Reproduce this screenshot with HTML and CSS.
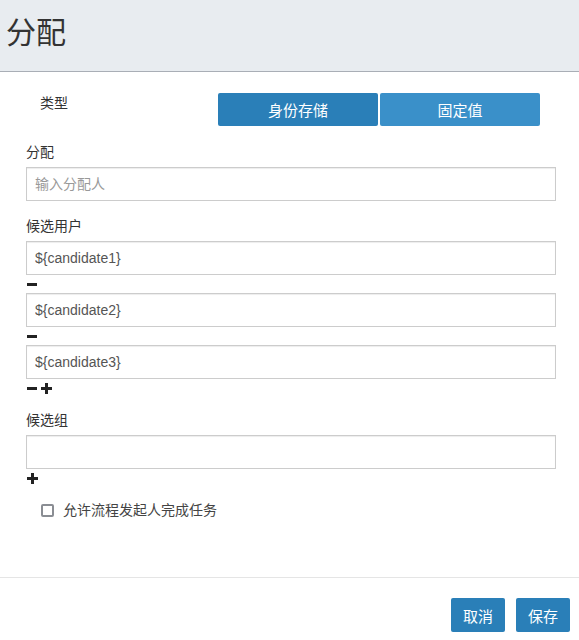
FILE: index.html
```html
<!DOCTYPE html>
<html lang="zh-CN">
    <head>
        <meta charset="utf-8">
        <title>分配</title>
        <link rel="stylesheet" href="styles.css">
    </head>
    <body>
        <div class="modal">
            <div class="modal-header">
                <h2>分配</h2>
            </div>

            <div class="modal-body">
                <div class="type-row">
                    <span class="type-label">类型</span>
                    <div class="btn-group">
                        <button class="btn btn-active">身份存储</button>
                        <button class="btn btn-light">固定值</button>
                    </div>
                </div>

                <div class="field">
                    <label>分配</label>
                    <input type="text" placeholder="输入分配人">
                </div>

                <div class="field field-list">
                    <label>候选用户</label>
                    <input type="text" value="${candidate1}">
                    <div class="tools">
                        <svg class="icon" width="10" height="3" viewBox="0 0 10 3"><rect width="10" height="3"/></svg>
                    </div>
                    <input type="text" value="${candidate2}">
                    <div class="tools">
                        <svg class="icon" width="10" height="3" viewBox="0 0 10 3"><rect width="10" height="3"/></svg>
                    </div>
                    <input type="text" value="${candidate3}">
                    <div class="tools">
                        <svg class="icon" width="10" height="3" viewBox="0 0 10 3"><rect width="10" height="3"/></svg>
                        <svg class="icon" width="11" height="11" viewBox="0 0 11 11"><rect y="4" width="11" height="3"/><rect x="4" width="3" height="11"/></svg>
                    </div>
                </div>

                <div class="field field-list">
                    <label>候选组</label>
                    <input type="text">
                    <div class="tools">
                        <svg class="icon" width="11" height="11" viewBox="0 0 11 11"><rect y="4" width="11" height="3"/><rect x="4" width="3" height="11"/></svg>
                    </div>
                </div>

                <label class="check-row">
                    <span class="check-box"></span>
                    允许流程发起人完成任务
                </label>
            </div>

            <div class="modal-footer">
                <button class="btn btn-footer">取消</button>
                <button class="btn btn-footer">保存</button>
            </div>
        </div>
    </body>
</html>
```

FILE: styles.css
```css
body {
    margin: 0;
    background-color: #fff;
    font-family: "Liberation Sans", "Noto Sans CJK SC", sans-serif;
    color: #333;
}

.modal {
    width: 579px;
    height: 640px;
    display: flex;
    flex-direction: column;
}

.modal-header {
    height: 71px;
    background-color: #e8ecf0;
    border-bottom: 1px solid #a9aeb6;
}

.modal-header h2 {
    margin: 0;
    padding: 18px 0 0 6px;
    font-size: 30px;
    font-weight: normal;
    line-height: 30px;
    color: #333;
}

.modal-body {
    padding: 21px 23px 0 26px;
}

.type-row {
    display: flex;
    margin-bottom: 17px;
}

.type-label {
    box-sizing: border-box;
    width: 192px;
    padding: 1px 0 0 14px;
    font-size: 14px;
    line-height: 18px;
}

.btn-group {
    display: flex;
    gap: 2px;
}

.btn {
    border: none;
    border-radius: 2px;
    color: #fff;
    font-family: inherit;
    font-size: 15px;
    padding: 0;
    cursor: pointer;
}

.btn-group .btn {
    width: 160px;
    height: 33px;
}

.btn-active {
    background-color: #2a7fb8;
}

.btn-light {
    background-color: #3a90c9;
}

.field {
    display: flex;
    flex-direction: column;
    margin-bottom: 16px;
}

.field-list {
    margin-bottom: 14px;
}

.field label {
    font-size: 14px;
    line-height: 18px;
    margin-bottom: 6px;
}

.field input {
    box-sizing: border-box;
    width: 530px;
    height: 34px;
    margin: 0;
    padding: 0 8px;
    border: 1px solid #ccc;
    border-radius: 0;
    box-shadow: inset 0 1px 1px rgba(0, 0, 0, 0.075);
    font-family: inherit;
    font-size: 14px;
    color: #555;
    outline: none;
}

.field input::placeholder {
    color: #999;
}

.tools {
    height: 18px;
    display: flex;
    align-items: center;
    gap: 4px;
    padding-left: 1px;
}

.icon {
    fill: #222;
}

.check-row {
    display: flex;
    align-items: center;
    gap: 9px;
    margin: 6px 0 0 15px;
    font-size: 14px;
    line-height: 18px;
    color: #444;
}

.check-box {
    box-sizing: border-box;
    width: 13px;
    height: 13px;
    border: 2px solid #8a8d93;
    border-radius: 2px;
}

.modal-footer {
    margin-top: auto;
    height: 42px;
    padding: 20px 9px 0 0;
    border-top: 1px solid #e5e5e5;
    display: flex;
    justify-content: flex-end;
    gap: 11px;
}

.btn-footer {
    width: 54px;
    height: 34px;
    background-color: #2a7fb8;
}
```
